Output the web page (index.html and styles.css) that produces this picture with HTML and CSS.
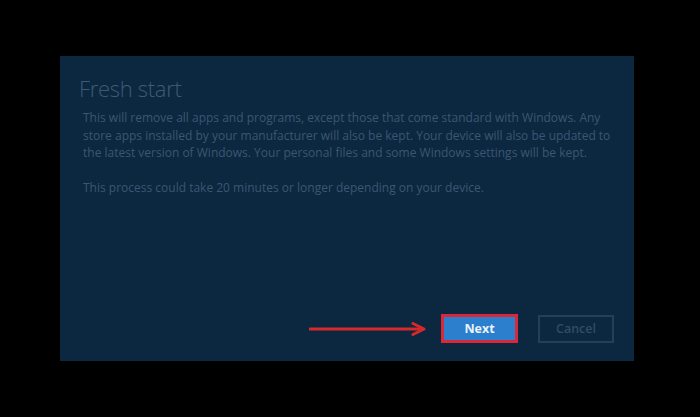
FILE: index.html
```html
<!DOCTYPE html>
<html lang="en">
<head>
<meta charset="utf-8">
<title>Fresh start</title>
<link rel="stylesheet" href="styles.css">
</head>
<body>
<div class="stage">
  <section class="panel">
    <h1 class="title">Fresh start</h1>
    <p class="text">This will remove all apps and programs, except those that come standard with Windows. Any<br>store apps installed by your manufacturer will also be kept. Your device will also be updated to<br>the latest version of Windows. Your personal files and some Windows settings will be kept.</p>
    <p class="text">This process could take 20 minutes or longer depending on your device.</p>
    <div class="actions">
      <svg class="arrow" width="118" height="14" viewBox="0 0 118 14" aria-hidden="true">
        <line x1="1" y1="7" x2="110" y2="7" stroke="#d62a2a" stroke-width="3" stroke-linecap="round"/>
        <path d="M104 1.5 L115 7 L104 12.5" fill="none" stroke="#d62a2a" stroke-width="3" stroke-linecap="round" stroke-linejoin="round"/>
      </svg>
      <button class="btn btn-next">Next</button>
      <button class="btn btn-cancel">Cancel</button>
    </div>
  </section>
</div>
</body>
</html>
```
FILE: styles.css
```css
html, body {
  margin: 0;
  padding: 0;
  background: #000;
}
.stage {
  width: 700px;
  height: 417px;
  padding: 56px 0 0 60px;
  box-sizing: border-box;
}
.panel {
  width: 574px;
  height: 305px;
  background: #0c2740;
  box-sizing: border-box;
  padding: 19px 20px 18px 19px;
  display: flex;
  flex-direction: column;
  font-family: "Open Sans", "Noto Sans", sans-serif;
}
.title {
  margin: 0;
  font-weight: 300;
  font-size: 22px;
  line-height: 26px;
  color: #3d5b77;
  letter-spacing: -0.3px;
}
.text {
  margin: 8px 0 0 4px;
  font-size: 12px;
  line-height: 17.5px;
  color: #395772;
  white-space: nowrap;
  letter-spacing: 0;
}
.text + .text {
  margin-top: 17px;
}
.actions {
  margin-top: auto;
  display: flex;
  justify-content: flex-end;
  align-items: center;
}
.arrow {
  margin-right: 14px;
  display: block;
}
.btn {
  font-family: "Open Sans", "Noto Sans", sans-serif;
  font-size: 12.5px;
  padding: 0;
  box-sizing: border-box;
}
.btn-next {
  width: 77px;
  height: 29px;
  background: #2c7fcd;
  border: 3px solid #d8283a;
  color: #eaf2fb;
  font-weight: 700;
}
.btn-cancel {
  margin-left: 20px;
  width: 76px;
  height: 28px;
  background: transparent;
  border: 2px solid #263f59;
  color: #304c67;
  font-weight: 600;
}
```
